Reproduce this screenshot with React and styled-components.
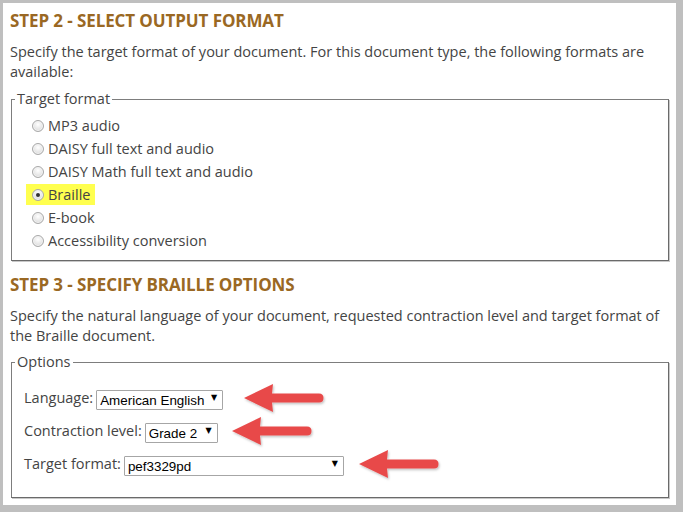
import styled, { createGlobalStyle } from 'styled-components'

const GlobalStyle = createGlobalStyle`
  html, body {
    margin: 0;
    padding: 0;
    background: #bfbfbf;
  }
  body {
    font-family: "Open Sans", "Lato", sans-serif;
  }
`;

const formats = [
  { label: 'MP3 audio' },
  { label: 'DAISY full text and audio' },
  { label: 'DAISY Math full text and audio' },
  { label: 'Braille', checked: true },
  { label: 'E-book' },
  { label: 'Accessibility conversion' },
];

const Arrow = ({ gap }) => (
  <ArrowSvg gap={gap} width="84" height="32" viewBox="0 0 84 32">
    <defs>
      <filter id="arrowShadow" x="-10%" y="-20%" width="130%" height="150%">
        <feDropShadow dx="1" dy="1.5" stdDeviation="1" floodColor="#000" floodOpacity="0.25" />
      </filter>
    </defs>
    <path
      d="M2 16 L31 2 L30 11.5 L77 11.5 Q81.5 11.5 81.5 16 Q81.5 20.5 77 20.5 L30 20.5 L31 30 Z"
      fill="#e84a4a"
      filter="url(#arrowShadow)"
    />
  </ArrowSvg>
);

const SelectBox = ({ value, width }) => (
  <SelectWrap width={width}>
    <FakeSelect defaultValue={value}>
      <option>{value}</option>
    </FakeSelect>
    <Caret>▼</Caret>
  </SelectWrap>
);

const App = () => {
  return (
    <>
      <GlobalStyle />
      <Panel>
        <Heading>STEP 2 - SELECT OUTPUT FORMAT</Heading>
        <Text>
          Specify the target format of your document. For this document type, the following formats are
          available:
        </Text>
        <Fieldset>
          <Legend>Target format</Legend>
          <RadioList>
            {formats.map((f) => (
              <RadioRow key={f.label}>
                <RadioLabel highlight={f.checked}>
                  <Radio checked={f.checked} />
                  {f.label}
                </RadioLabel>
              </RadioRow>
            ))}
          </RadioList>
        </Fieldset>

        <Heading top={13}>STEP 3 - SPECIFY BRAILLE OPTIONS</Heading>
        <Text>
          Specify the natural language of your document, requested contraction level and target format of
          the Braille document.
        </Text>
        <Fieldset second>
          <Legend>Options</Legend>
          <OptionList>
            <OptionRow>
              <OptionLabel>Language:</OptionLabel>
              <SelectBox value="American English" width={127} />
              <Arrow gap={19} />
            </OptionRow>
            <OptionRow>
              <OptionLabel>Contraction level:</OptionLabel>
              <SelectBox value="Grade 2" width={73} />
              <Arrow gap={12} />
            </OptionRow>
            <OptionRow>
              <OptionLabel>Target format:</OptionLabel>
              <SelectBox value="pef3329pd" width={220} />
              <Arrow gap={13} />
            </OptionRow>
          </OptionList>
        </Fieldset>
      </Panel>
    </>
  );
};

export default App;

const Panel = styled.div`
  margin: 3px 7px 0 3px;
  height: 502px;
  background: #fff;
  box-sizing: border-box;
  padding: 7px 7px 0 7px;
  color: #444;
`;

const Heading = styled.h2`
  margin: ${({ top }) => top || 0}px 0 0 0;
  font-family: "Open Sans", sans-serif;
  font-weight: 700;
  font-size: 17px;
  line-height: 22px;
  color: #9a6823;
  letter-spacing: -0.1px;
`;

const Text = styled.p`
  margin: 10px 0 0 0;
  font-size: 14.5px;
  line-height: 20px;
  color: #444;
`;

const Fieldset = styled.fieldset`
  margin: ${({ second }) => (second ? 6 : 7)}px 0 0 1px;
  padding: 0 0 ${({ second }) => (second ? 17 : 8)}px 3px;
  border: 1px solid #7d7d7d;
  border-right-color: #6a6a6a;
  border-bottom-color: #6a6a6a;
  box-shadow: 1px 1px 0 #c8c8c8;
  min-width: 0;
`;

const Legend = styled.legend`
  padding: 0 2px;
  font-size: 14.5px;
  line-height: 20px;
  color: #444;
`;

const RadioList = styled.div`
  display: flex;
  flex-direction: column;
  padding: 5px 0 0 11px;
`;

const RadioRow = styled.div`
  height: 23px;
  display: flex;
  align-items: center;
`;

const RadioLabel = styled.label`
  display: inline-flex;
  align-items: center;
  gap: 4px;
  font-size: 14.5px;
  line-height: 21px;
  padding: 0 5px 0 6px;
  background: ${({ highlight }) => (highlight ? '#ffff4f' : 'transparent')};
  color: #444;
`;

const Radio = styled.span`
  width: 10px;
  height: 10px;
  border-radius: 50%;
  border: 1px solid #a9a9a9;
  background: radial-gradient(circle at 50% 35%, #ffffff 0%, #e4e4e4 60%, #cfcfcf 100%);
  box-shadow: inset 0 0 0 1px #f4f4f4;
  position: relative;
  flex: none;
  &::after {
    content: '';
    display: ${({ checked }) => (checked ? 'block' : 'none')};
    position: absolute;
    left: 3px;
    top: 3px;
    width: 4px;
    height: 4px;
    border-radius: 50%;
    background: #333;
  }
`;

const OptionList = styled.div`
  display: flex;
  flex-direction: column;
  padding: 9px 0 0 9px;
`;

const OptionRow = styled.div`
  height: 33px;
  display: flex;
  align-items: center;
`;

const OptionLabel = styled.span`
  font-size: 14.5px;
  color: #444;
  margin-right: 3px;
`;

const SelectWrap = styled.div`
  position: relative;
  width: ${({ width }) => width}px;
  height: 20px;
  flex: none;
`;

const FakeSelect = styled.select`
  appearance: none;
  -webkit-appearance: none;
  width: 100%;
  height: 100%;
  box-sizing: border-box;
  border: 1px solid #a6a6a6;
  border-radius: 1px;
  background: #fff;
  padding: 0 14px 0 3px;
  font-family: "Liberation Sans", Arial, sans-serif;
  font-size: 13.4px;
  color: #000;
  outline: none;
`;

const Caret = styled.span`
  position: absolute;
  right: 6px;
  top: 3px;
  font-family: "DejaVu Sans", sans-serif;
  font-size: 8px;
  line-height: 14px;
  color: #000;
  pointer-events: none;
`;

const ArrowSvg = styled.svg`
  margin-left: ${({ gap }) => gap}px;
  flex: none;
  overflow: visible;
`;
